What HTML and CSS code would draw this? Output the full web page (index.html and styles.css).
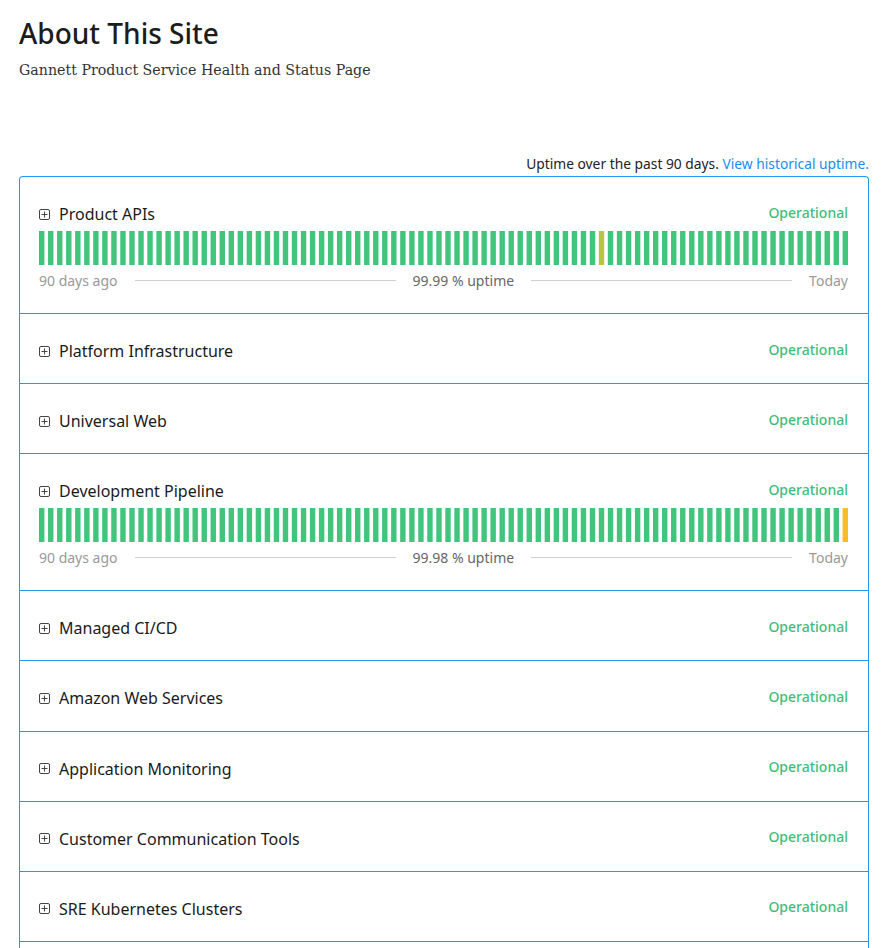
FILE: index.html
```html
<!DOCTYPE html>
<html>
<head>
<meta charset="utf-8">
<link rel="stylesheet" href="styles.css">
</head>
<body>
<div class="page">
  <h1 class="title">About This Site</h1>
  <p class="subtitle">Gannett Product Service Health and Status Page</p>
  <div class="uptime-note">Uptime over the past 90 days. <a class="link" href="#">View historical uptime.</a></div>
  <div class="components" id="components"></div>
</div>
<script src="app.js"></script>
</body>
</html>
```
FILE: styles.css
```css
* { box-sizing: border-box; }
body {
  margin: 0;
  background: #fff;
  font-family: "Noto Sans", "DejaVu Sans", sans-serif;
  color: #1c1c1c;
}
.page {
  width: 850px;
  margin-left: 19px;
  padding-top: 16px;
}
.title {
  margin: 0;
  font-size: 28px;
  line-height: 34px;
  font-weight: 500;
  color: #1c1c1c;
}
.subtitle {
  margin: 10px 0 0;
  font-family: "DejaVu Serif", serif;
  font-size: 14.2px;
  line-height: 20px;
  color: #333;
}
.uptime-note {
  margin-top: 75px;
  text-align: right;
  font-size: 13.8px;
  line-height: 18px;
  color: #222;
}
.link { color: #1a8df0; text-decoration: none; }
.components {
  margin-top: 3px;
  border: 1px solid #1a9af5;
  border-bottom: none;
  border-radius: 4px 4px 0 0;
}
.row {
  padding: 26px 20px 21.15px 19px;
  border-bottom: 1px solid #1a9af5;
}
.row.has-bar { padding-bottom: 23px; }
.head {
  display: flex;
  align-items: center;
  justify-content: space-between;
  height: 22px;
}
.name {
  display: flex;
  align-items: center;
  gap: 9px;
  font-size: 16px;
  font-weight: 400;
  color: #1a1a1a;
}
.icon { width: 11px; height: 11px; display: block; }
.status {
  font-size: 14px;
  font-weight: 500;
  color: #3ebd78;
  position: relative;
  top: -2px;
}
.bars {
  display: block;
  width: 100%;
  height: 34px;
  margin-top: 6px;
}
.labels {
  display: flex;
  align-items: center;
  gap: 17px;
  margin-top: 5px;
  height: 20px;
  font-size: 14px;
  color: #999;
}
.line { flex: 1; height: 1px; background: #cfcfcf; }
.pct { color: #666; }
```
FILE: app.js
```js
const comps = [
  { name: "Product APIs", bars: true, pct: "99.99", warn: { 62: "#b8c541" } },
  { name: "Platform Infrastructure" },
  { name: "Universal Web" },
  { name: "Development Pipeline", bars: true, pct: "99.98", warn: { 89: "#f8bd2b" } },
  { name: "Managed CI/CD" },
  { name: "Amazon Web Services" },
  { name: "Application Monitoring" },
  { name: "Customer Communication Tools" },
  { name: "SRE Kubernetes Clusters" },
  { name: "Cloud Services" }
];
const icon = '<svg class="icon" viewBox="0 0 11 11"><rect x="0.5" y="0.5" width="10" height="10" rx="1.5" fill="none" stroke="#444" stroke-width="1"/><path d="M5.5 2.5v6M2.5 5.5h6" stroke="#444" stroke-width="1"/></svg>';
const root = document.getElementById("components");
let html = "";
for (const c of comps) {
  html += '<div class="row' + (c.bars ? ' has-bar' : '') + '"><div class="head"><div class="name">' + icon + '<span>' + c.name + '</span></div><span class="status">Operational</span></div>';
  if (c.bars) {
    let rects = "";
    for (let i = 0; i < 90; i++) {
      const col = (c.warn && c.warn[i]) || "#43c47d";
      rects += '<rect x="' + (i * 5) + '" y="0" width="3" height="34" fill="' + col + '"/>';
    }
    html += '<svg class="bars" viewBox="0 0 448 34" preserveAspectRatio="none">' + rects + '</svg>';
    html += '<div class="labels"><span>90 days ago</span><span class="line"></span><span class="pct">' + c.pct + ' % uptime</span><span class="line"></span><span>Today</span></div>';
  }
  html += '</div>';
}
root.innerHTML = html;
```
